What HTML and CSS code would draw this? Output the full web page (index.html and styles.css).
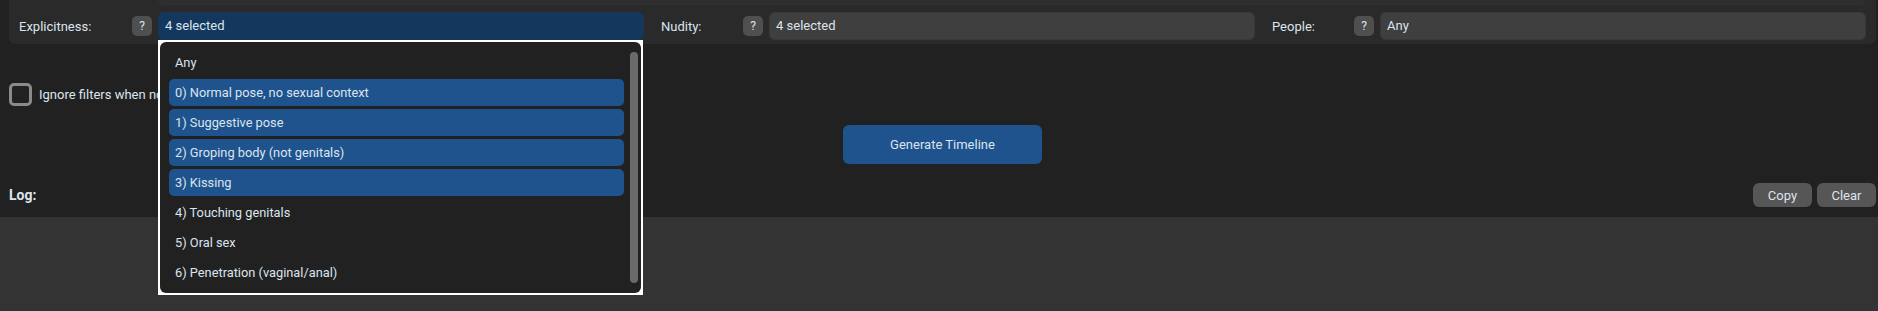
FILE: index.html
```html
<!DOCTYPE html>
<html lang="en">
<head>
  <meta charset="UTF-8" />
  <meta name="viewport" content="width=device-width, initial-scale=1" />
  <title>Timeline</title>
  <link rel="stylesheet" href="styles.css">
</head>
<body>

<div class="app">
  <section class="panel">
    <div class="filters">
      <div class="field wide"></div>

      <label class="label">Explicitness:</label>
      <span class="help">?</span>
      <div class="select active">
        4 selected
        <div class="dropdown">
          <div class="dropdown-inner">
            <ul class="options">
              <li>Any</li>
              <li class="on">0) Normal pose, no sexual context</li>
              <li class="on">1) Suggestive pose</li>
              <li class="on">2) Groping body (not genitals)</li>
              <li class="on">3) Kissing</li>
              <li>4) Touching genitals</li>
              <li>5) Oral sex</li>
              <li>6) Penetration (vaginal/anal)</li>
            </ul>
            <div class="scroll"><div class="thumb"></div></div>
          </div>
        </div>
      </div>

      <label class="label next">Nudity:</label>
      <span class="help">?</span>
      <div class="select">4 selected</div>

      <label class="label next">People:</label>
      <span class="help">?</span>
      <div class="select">Any</div>
    </div>
  </section>

  <div class="check-row">
    <span class="checkbox"></span>
    <span>Ignore filters when no data</span>
  </div>

  <div class="actions">
    <button type="button" class="primary">Generate Timeline</button>
  </div>

  <div class="log-head">
    <strong class="log-title">Log:</strong>
    <div class="log-buttons">
      <button type="button" class="small">Copy</button>
      <button type="button" class="small">Clear</button>
    </div>
  </div>
</div>

<div class="log-box"></div>

</body>
</html>
```

FILE: styles.css
```css
html, body {
  height: 311px;
  overflow: hidden;
}
body {
  margin: 0;
  background: #212121;
  font-family: Roboto, 'Liberation Sans', sans-serif;
  font-size: 13px;
  color: #dce4ee;
  display: flex;
  flex-direction: column;
}
.app {
  padding: 0 2px 0 9px;
}

/* filtros */
.panel {
  background: #2a2a2a;
  border-radius: 6px;
  margin-top: -30px;
  padding: 7px 10px 4px;
}
.filters {
  display: grid;
  grid-template-columns: 113px 26px 1fr 99px 26px 1fr 99px 26px 1fr;
  row-gap: 7px;
  align-items: center;
}
.field.wide {
  grid-column: 3 / -1;
  height: 28px;
  background: #2f2f2f;
  border-radius: 6px;
}
.label {
  white-space: nowrap;
}
.label.next {
  padding-left: 17px;
}
.help {
  width: 20px;
  height: 20px;
  border-radius: 5px;
  background: #4f4f4f;
  display: flex;
  align-items: center;
  justify-content: center;
  font-size: 12px;
}
.select {
  position: relative;
  height: 28px;
  line-height: 28px;
  padding: 0 7px;
  border-radius: 6px;
  background: #3f3f3f;
  box-shadow: inset 0 0 0 1px #383838;
}
.select.active {
  background: #14375e;
  box-shadow: none;
}

/* lista desplegable */
.dropdown {
  position: absolute;
  top: 28px;
  left: 0;
  width: 485px;
  height: 255px;
  box-sizing: border-box;
  background: #fff;
  padding: 2px;
  z-index: 10;
  line-height: normal;
}
.dropdown-inner {
  height: 100%;
  background: #212121;
  border-radius: 6px;
  display: flex;
  padding: 0 3px 0 9px;
  box-sizing: border-box;
}
.options {
  list-style: none;
  margin: 0;
  padding: 7px 0 0;
  flex: 1;
  display: flex;
  flex-direction: column;
  gap: 3px;
  font-size: 12.8px;
}
.options li {
  height: 27px;
  line-height: 27px;
  padding-left: 6px;
  border-radius: 5px;
}
.options li.on {
  background: #1f538d;
}
.scroll {
  width: 8px;
  margin-left: 6px;
  padding: 10px 0;
}
.thumb {
  height: 100%;
  background: #6a6a6a;
  border-radius: 4px;
}

.check-row {
  margin-top: 39px;
  height: 23px;
  display: flex;
  align-items: center;
  gap: 7px;
}
.checkbox {
  width: 23px;
  height: 23px;
  box-sizing: border-box;
  border: 3px solid #8a8a8a;
  border-radius: 5px;
}

.actions {
  margin-top: 19px;
  display: flex;
  justify-content: center;
}
button {
  font-family: inherit;
  font-size: 13px;
  color: #dce4ee;
  border: none;
  border-radius: 6px;
  cursor: pointer;
}
button.primary {
  width: 199px;
  height: 39px;
  background: #1f538d;
}
button.primary:hover {
  background: #14375e;
}

.log-head {
  margin-top: 19px;
  height: 24px;
  display: flex;
  align-items: center;
  justify-content: space-between;
}
.log-title {
  font-size: 14px;
}
.log-buttons {
  display: flex;
  gap: 5px;
}
button.small {
  width: 59px;
  height: 24px;
  background: #565656;
}
button.small:hover {
  background: #666;
}

.log-box {
  margin-top: 10px;
  flex: 1;
  background: #333;
}
```
